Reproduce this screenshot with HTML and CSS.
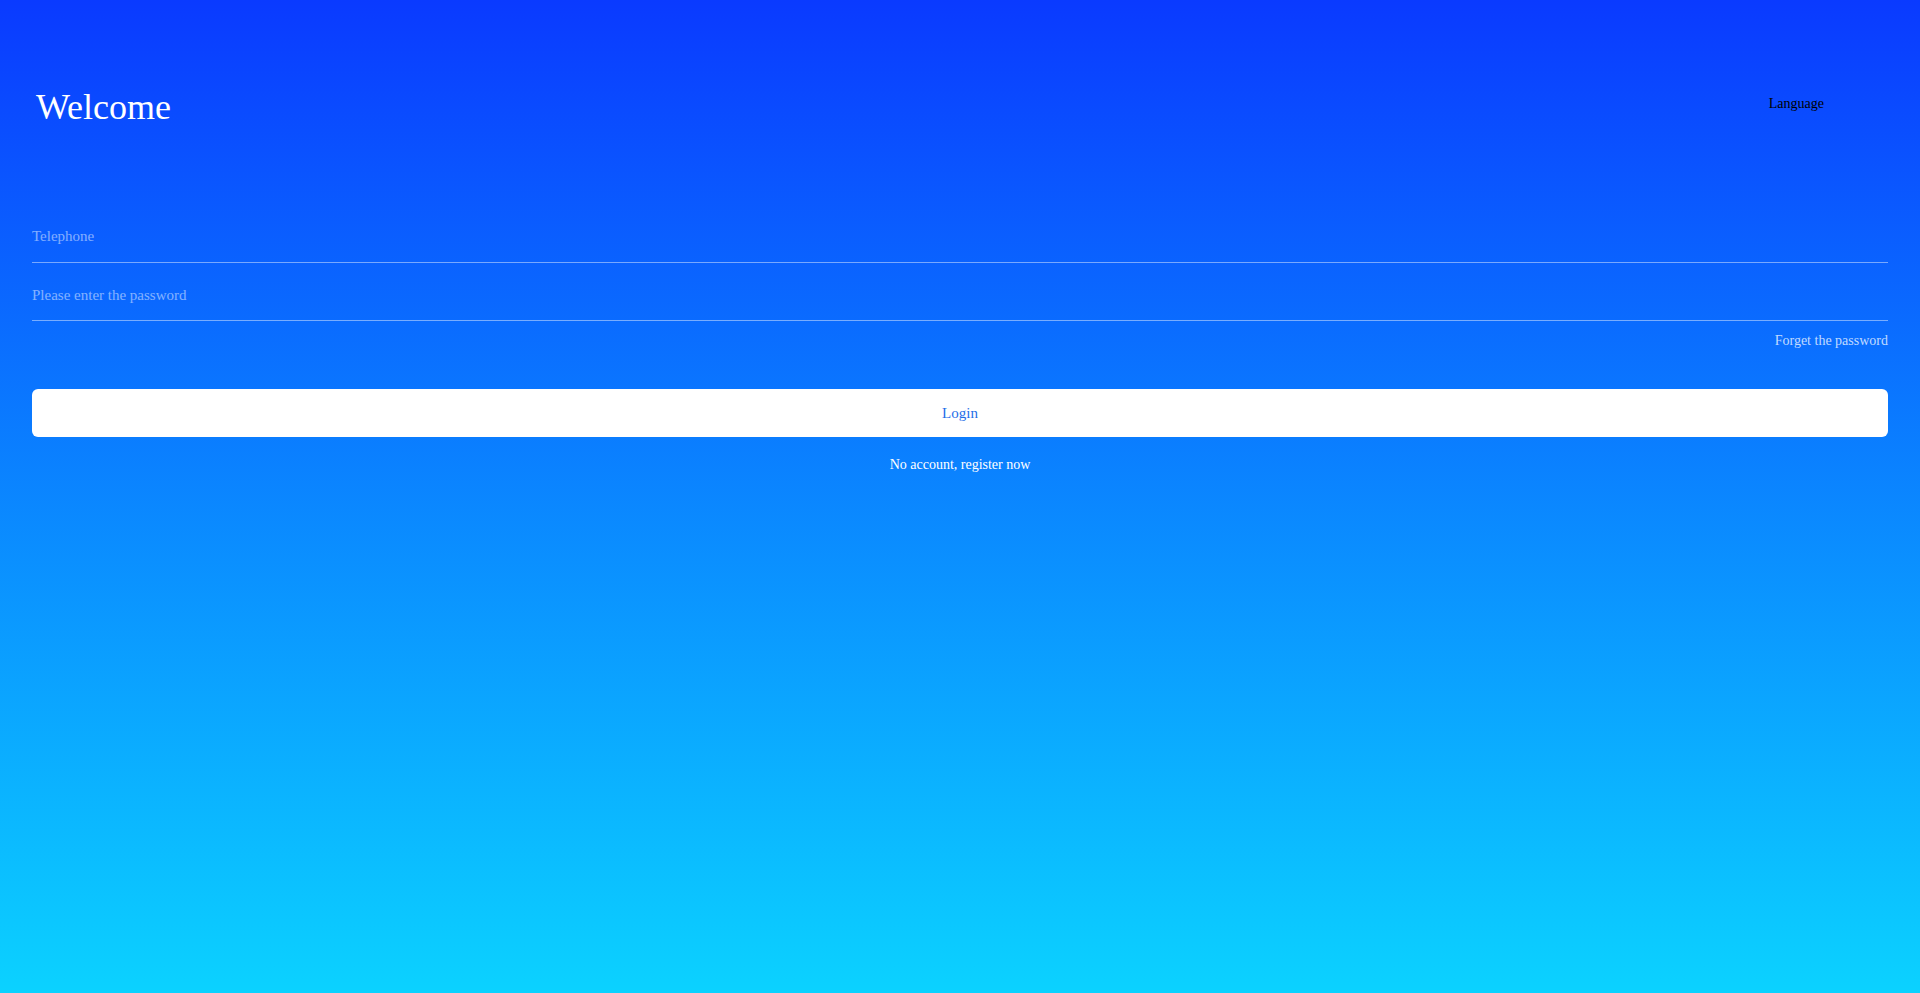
FILE: index.html
```html
<!DOCTYPE html>
<html lang="en">
<head>
<meta charset="utf-8">
<title>Login</title>
<link rel="stylesheet" href="styles.css">
</head>
<body>
<div class="page">
  <header class="header">
    <h1 class="title">Welcome</h1>
    <div class="lang">Language</div>
  </header>
  <form class="form">
    <input class="field" type="tel" placeholder="Telephone">
    <input class="field field-pw" type="password" placeholder="Please enter the password">
    <div class="forget-row"><a class="forget">Forget the password</a></div>
    <button type="button" class="login">Login</button>
    <div class="register">No account, register now</div>
  </form>
</div>
</body>
</html>
```
FILE: styles.css
```css
html, body {
  margin: 0;
  padding: 0;
  height: 100%;
}
body {
  font-family: "Liberation Serif", "Times New Roman", serif;
  background: linear-gradient(to bottom, #0a3aff 0%, #0bd2ff 100%);
  color: #fff;
}
.page {
  min-height: 100vh;
}
.header {
  display: flex;
  justify-content: space-between;
  align-items: flex-start;
  padding: 87px 96px 0 36px;
}
.title {
  margin: 0;
  font-size: 36px;
  line-height: 40px;
  font-weight: normal;
  color: #fff;
}
.lang {
  margin-top: 9px;
  font-size: 14px;
  line-height: 16px;
  color: #000;
}
.form {
  margin: 89px 32px 0 32px;
  display: flex;
  flex-direction: column;
}
.field {
  box-sizing: border-box;
  width: 100%;
  height: 47px;
  padding: 0 0 5px 0;
  border: none;
  border-bottom: 1px solid rgba(255, 255, 255, 0.45);
  background: transparent;
  outline: none;
  font-family: inherit;
  font-size: 15px;
  color: #fff;
}
.field::placeholder {
  color: rgba(255, 255, 255, 0.5);
}
.field-pw {
  margin-top: 11px;
  padding-bottom: 4px;
}
.forget-row {
  display: flex;
  justify-content: flex-end;
  margin-top: 12px;
}
.forget {
  font-size: 14px;
  line-height: 16px;
  color: rgba(255, 255, 255, 0.75);
}
.login {
  margin-top: 40px;
  height: 48px;
  width: 100%;
  border: none;
  border-radius: 6px;
  background: #fff;
  font-family: inherit;
  font-size: 15px;
  color: #1e6ee8;
  padding: 0;
}
.register {
  margin-top: 20px;
  text-align: center;
  font-size: 14px;
  line-height: 16px;
  color: #fff;
}
```
